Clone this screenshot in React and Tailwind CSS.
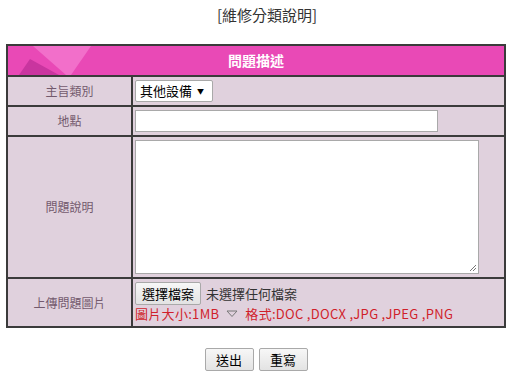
import React from 'react';

const font = { fontFamily: '"Noto Sans CJK TC", "Noto Sans", sans-serif' };

function HeaderDeco() {
  return (
    <svg width="100" height="29" viewBox="0 0 100 29" className="absolute left-0 top-0">
      <polygon points="25,0 83,0 63,29 58,29" fill="#f26fca" />
      <polygon points="11,29 22,13 51,29" fill="#c9359f" />
    </svg>
  );
}

function LabelCell({ children }) {
  return (
    <td className="w-[125px] border-2 border-[#3b3b3b] bg-[#e0d1dd] text-center text-[12px] text-[#735a6d] align-middle">
      {children}
    </td>
  );
}

export default function App() {
  return (
    <div className="w-[512px] h-[384px] bg-white" style={font}>
      <div className="pt-[4px] text-center text-[15px] text-[#333] leading-[22px] pl-[22px]">[維修分類說明]</div>
      <div className="px-[6px] pt-[18px]">
        <table className="w-[500px] border-collapse border-2 border-[#3b3b3b]">
          <tbody>
            <tr className="h-[31px]">
              <td colSpan={2} className="relative overflow-hidden bg-[#e949b6] p-0 text-center text-[14px] font-bold text-white border-2 border-[#3b3b3b]">
                <HeaderDeco />
                <span className="relative">問題描述</span>
              </td>
            </tr>
            <tr className="h-[30px]">
              <LabelCell>主旨類別</LabelCell>
              <td className="border-2 border-[#3b3b3b] bg-[#e0d1dd] px-[2px]">
                <div className="flex h-[22px] w-[78px] items-center justify-between rounded-[2px] border border-[#a9a9a9] bg-white pl-[4px] pr-[8px] text-[13px] text-black">
                  <span>其他設備</span>
                  <span className="text-[7px]">▼</span>
                </div>
              </td>
            </tr>
            <tr className="h-[30px]">
              <LabelCell>地點</LabelCell>
              <td className="border-2 border-[#3b3b3b] bg-[#e0d1dd] px-[2px]">
                <div className="h-[22px] w-[303px] border border-[#a9a9a9] bg-white" />
              </td>
            </tr>
            <tr className="h-[142px]">
              <LabelCell>問題說明</LabelCell>
              <td className="border-2 border-[#3b3b3b] bg-[#e0d1dd] px-[2px] align-middle">
                <div className="relative h-[134px] w-[344px] border border-[#a9a9a9] bg-white">
                  <svg width="8" height="8" className="absolute right-[1px] bottom-[1px]">
                    <line x1="1" y1="7" x2="7" y2="1" stroke="#777" />
                    <line x1="4" y1="7" x2="7" y2="4" stroke="#777" />
                  </svg>
                </div>
              </td>
            </tr>
            <tr className="h-[49px]">
              <LabelCell>上傳問題圖片</LabelCell>
              <td className="border-2 border-[#3b3b3b] bg-[#e0d1dd] px-[2px] align-top pt-[3px]">
                <div className="flex items-center gap-[5px] text-[13px] text-[#333]">
                  <span className="flex h-[23px] items-center rounded-[2px] border border-[#a9a9a9] bg-gradient-to-b from-[#f7f7f7] to-[#e3e3e3] px-[6px] text-black">選擇檔案</span>
                  <span>未選擇任何檔案</span>
                </div>
                <div className="flex items-center text-[13px] leading-[18px] tracking-[0.3px] text-[#d01f2b]">
                  <span>圖片大小:1MB</span>
                  <svg width="12" height="8" viewBox="0 0 12 8" className="mx-[7px]">
                    <polygon points="1,1 11,1 6,6.5" fill="none" stroke="#777" strokeWidth="1" />
                  </svg>
                  <span>格式:DOC ,DOCX ,JPG ,JPEG ,PNG</span>
                </div>
              </td>
            </tr>
          </tbody>
        </table>
      </div>
      <div className="mt-[20px] flex justify-center gap-[5px]">
        <span className="flex h-[23px] w-[49px] items-center justify-center rounded-[2px] border border-[#a9a9a9] bg-gradient-to-b from-[#f7f7f7] to-[#e3e3e3] text-[13px] text-black">送出</span>
        <span className="flex h-[23px] w-[49px] items-center justify-center rounded-[2px] border border-[#a9a9a9] bg-gradient-to-b from-[#f7f7f7] to-[#e3e3e3] text-[13px] text-black">重寫</span>
      </div>
    </div>
  );
}
